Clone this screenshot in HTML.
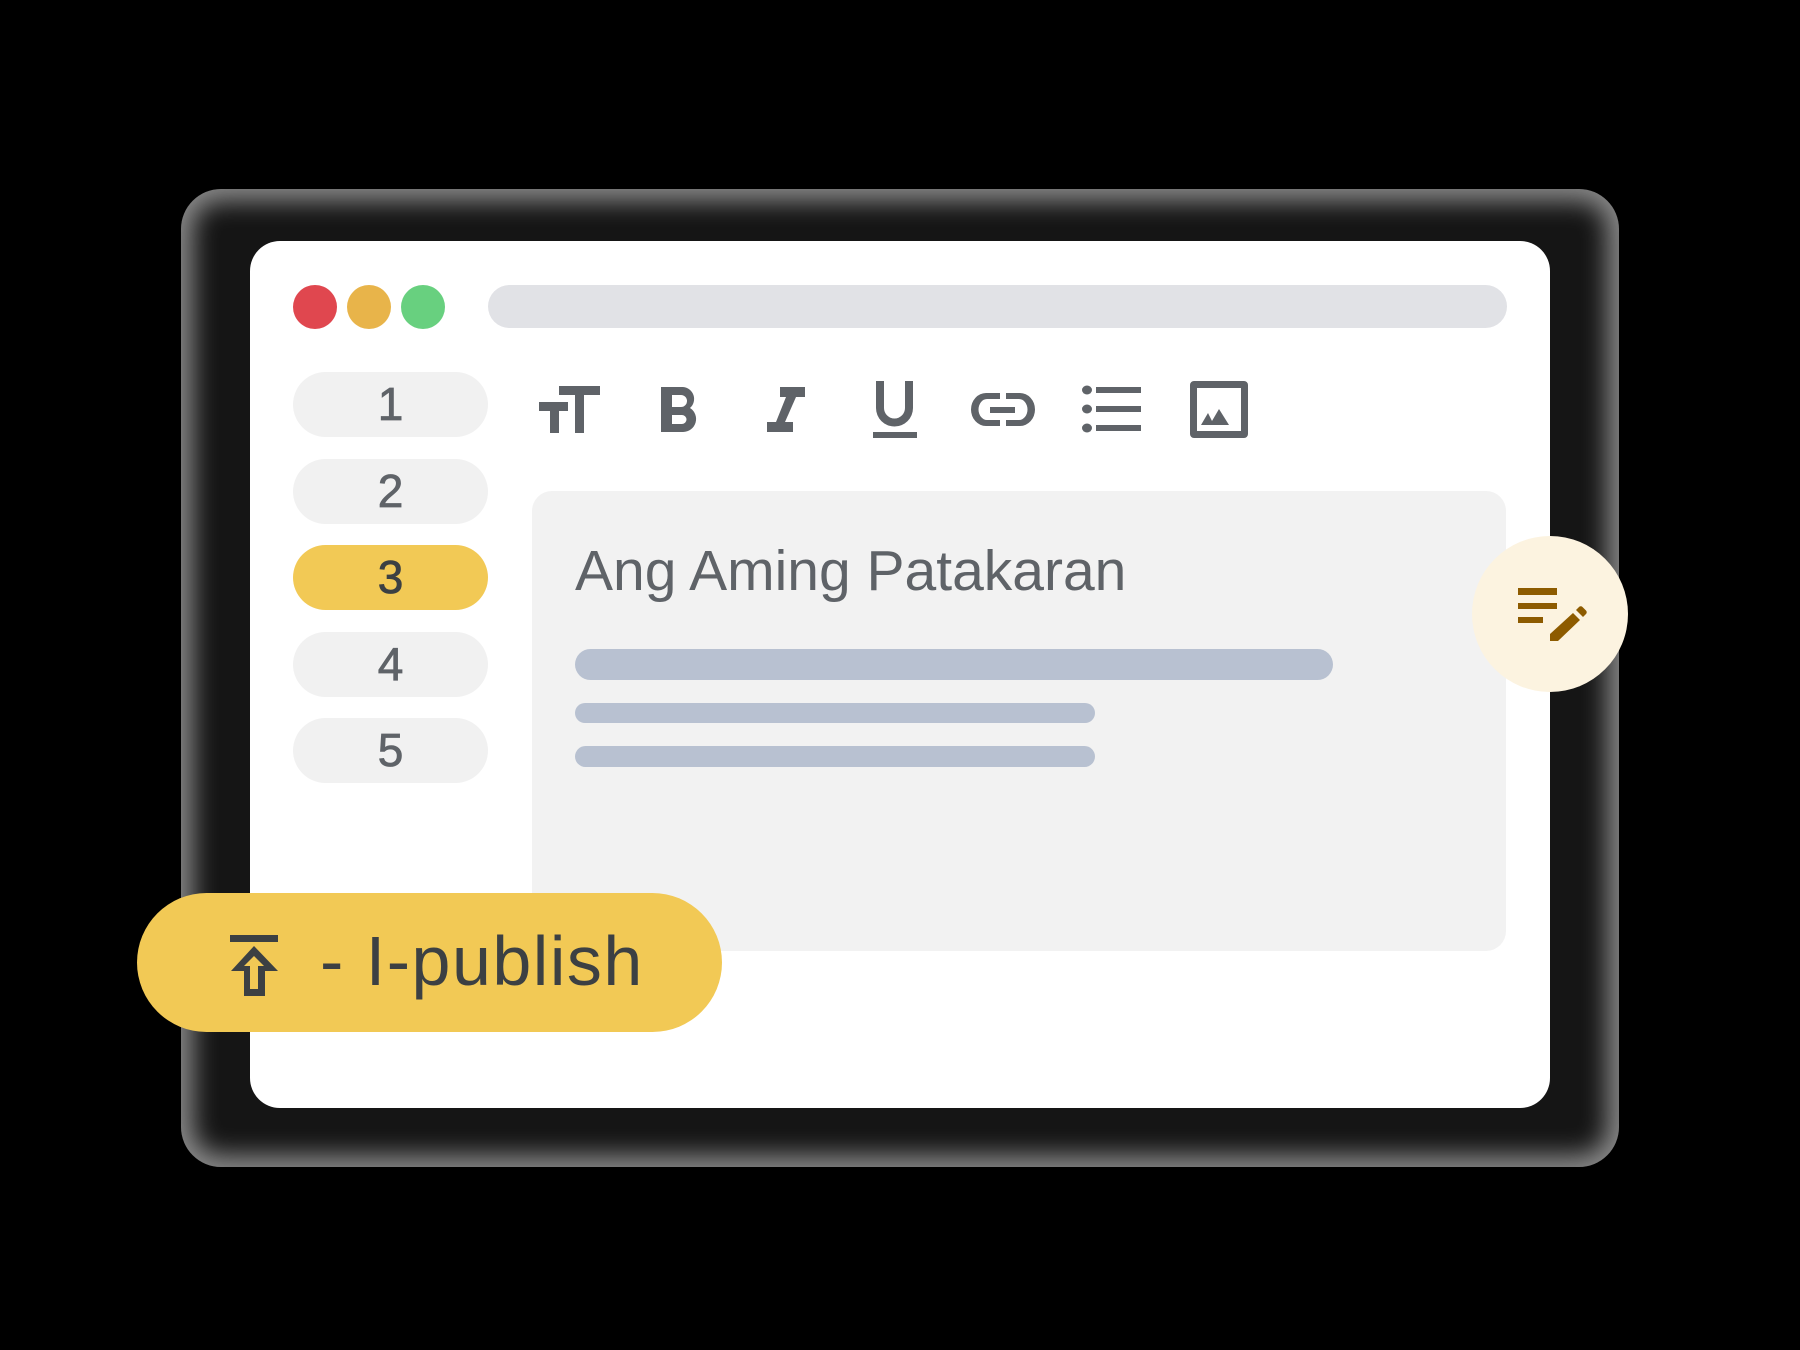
<!DOCTYPE html>
<html><head><meta charset="utf-8"><style>
html,body{margin:0;padding:0;background:#000;width:1800px;height:1350px;overflow:hidden;font-family:"Liberation Sans",sans-serif}
.abs{position:absolute}
.shadow{left:181px;top:189px;width:1438px;height:978px;border-radius:40px;background:#151515;box-shadow:inset 0 0 25px 12px #8a8a8a}
.win{left:250px;top:241px;width:1300px;height:867px;background:#fff;border-radius:30px}
.dot{width:44px;height:44px;border-radius:50%;top:285px}
.url{left:488px;top:285px;width:1019px;height:43px;border-radius:22px;background:#e1e2e6}
.pill{left:293px;width:195px;height:65px;border-radius:33px;background:#f1f1f1;color:#5f6368;font-size:46px;text-align:center;line-height:65px;-webkit-text-stroke:0.8px #5f6368}
.content{left:532px;top:491px;width:974px;height:460px;background:#f2f2f2;border-radius:20px}
.bar{background:#b8c1d1;border-radius:12px;left:575px}
</style></head><body>
<div class="abs shadow"></div>
<div class="abs win"></div>
<div class="abs dot" style="left:293px;background:#e0474f"></div>
<div class="abs dot" style="left:347px;background:#e8b44a"></div>
<div class="abs dot" style="left:401px;background:#68d07f"></div>
<div class="abs url"></div>
<div class="abs pill" style="top:372px">1</div>
<div class="abs pill" style="top:459px">2</div>
<div class="abs pill" style="top:545px;background:#f2c955;color:#3c4043;-webkit-text-stroke:0.8px #3c4043">3</div>
<div class="abs pill" style="top:632px">4</div>
<div class="abs pill" style="top:718px">5</div>

<svg class="abs" style="left:530px;top:370px" width="740" height="80" viewBox="530 370 740 80" fill="#5f6368">
<!-- tT -->
<rect x="539" y="402" width="29" height="9"/><rect x="550" y="402" width="9" height="31"/>
<rect x="559" y="386" width="41" height="9"/><rect x="575" y="386" width="9" height="47"/>
<!-- B -->
<path d="M661 387h22a12 12 0 0 1 7 21a13 13 0 0 1-7 24h-22zM672 395v12h9a6 6 0 0 0 0-12zM672 415v9h10a4.5 4.5 0 0 0 0-9z" fill-rule="evenodd"/>
<!-- I -->
<rect x="780" y="387" width="25" height="10"/><path d="M786 397h10l-11 25h-9z"/><rect x="767" y="422" width="26" height="10"/>
<!-- U -->
<path d="M876 381h8v27a10.5 10.5 0 0 0 21 0v-27h8v27a18.5 18.5 0 0 1-37 0z"/><rect x="873" y="432" width="44" height="6"/>
<!-- link -->
<path d="M1000 393h-14a15 16.5 0 0 0 0 33h14v-6h-13a8.5 10.5 0 0 1 0-21h13zM1006 393h14a15 16.5 0 0 1 0 33h-14v-6h13a8.5 10.5 0 0 0 0-21h-13zM990 407h25v6h-25z"/>
<!-- list -->
<ellipse cx="1087" cy="390" rx="5" ry="4.5"/><ellipse cx="1087" cy="409" rx="5" ry="4.5"/><ellipse cx="1087" cy="428" rx="5" ry="4.5"/>
<rect x="1096" y="387" width="45" height="6"/><rect x="1096" y="406" width="45" height="6"/><rect x="1096" y="425" width="45" height="6"/>
<!-- image -->
<path d="M1194 381h50a4 4 0 0 1 4 4v49a4 4 0 0 1-4 4h-50a4 4 0 0 1-4-4v-49a4 4 0 0 1 4-4zM1197 388v43h44v-43z" fill-rule="evenodd"/>
<path d="M1201 425l7-12l4 8l7-12l10 16z"/>
</svg>

<div class="abs content"></div>
<div class="abs" style="left:575px;top:538px;font-size:57px;color:#5f6368;line-height:66px;white-space:nowrap">Ang Aming Patakaran</div>
<div class="abs bar" style="top:649px;width:758px;height:31px;border-radius:16px"></div>
<div class="abs bar" style="top:703px;width:520px;height:20px"></div>
<div class="abs bar" style="top:746px;width:520px;height:21px"></div>

<div class="abs" style="left:1472px;top:536px;width:156px;height:156px;border-radius:50%;background:#fcf3e0"></div>
<svg class="abs" style="left:1510px;top:580px" width="80" height="80" viewBox="1510 580 80 80" fill="#8d5b00">
<rect x="1518" y="588" width="39" height="7"/><rect x="1518" y="603" width="39" height="6"/><rect x="1518" y="617" width="25" height="6"/>
<path d="M1573 613l7 7l-22 21h-8v-7z"/><path d="M1576 610l3-3a2.5 2.5 0 0 1 3.5 0l3.5 3.5a2.5 2.5 0 0 1 0 3.5l-3 3z"/>
</svg>

<div class="abs" style="left:137px;top:893px;width:585px;height:139px;border-radius:70px;background:#f2c955"></div>
<svg class="abs" style="left:225px;top:930px" width="60" height="70" viewBox="0 0 60 70" fill="#3c4043">
<rect x="5" y="5" width="48" height="7"/>
<path d="M29 16l24 25h-13v25h-21v-25h-13zM29 26l-10 10h6v23h8v-23h6z" fill-rule="evenodd"/>
</svg>
<div class="abs" style="left:320px;top:921px;font-size:70px;line-height:80px;color:#3c4043;white-space:nowrap;letter-spacing:1.5px">- I-publish</div>
</body></html>
